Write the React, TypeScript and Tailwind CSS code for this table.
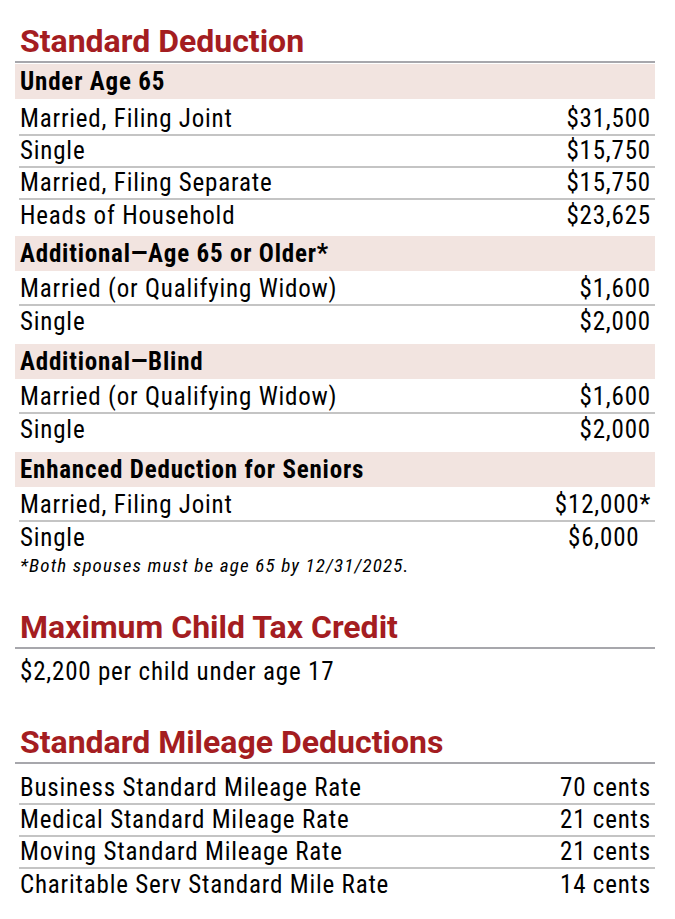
import type { ReactElement } from 'react';

type Row = { label: string; value: string; mark?: boolean };
type Group = { title: string; rows: Row[] };

const DEDUCTIONS: Group[] = [
  {
    title: 'Under Age 65',
    rows: [
      { label: 'Married, Filing Joint', value: '$31,500' },
      { label: 'Single', value: '$15,750' },
      { label: 'Married, Filing Separate', value: '$15,750' },
      { label: 'Heads of Household', value: '$23,625' },
    ],
  },
  {
    title: 'Additional\u2014Age 65 or Older*',
    rows: [
      { label: 'Married (or Qualifying Widow)', value: '$1,600' },
      { label: 'Single', value: '$2,000' },
    ],
  },
  {
    title: 'Additional\u2014Blind',
    rows: [
      { label: 'Married (or Qualifying Widow)', value: '$1,600' },
      { label: 'Single', value: '$2,000' },
    ],
  },
  {
    title: 'Enhanced Deduction for Seniors',
    rows: [
      { label: 'Married, Filing Joint', value: '$12,000*' },
      // trailing invisible asterisk keeps the digits lined up with the row above
      { label: 'Single', value: '$6,000', mark: true },
    ],
  },
];

const MILEAGE: Row[] = [
  { label: 'Business Standard Mileage Rate', value: '70 cents' },
  { label: 'Medical Standard Mileage Rate', value: '21 cents' },
  { label: 'Moving Standard Mileage Rate', value: '21 cents' },
  { label: 'Charitable Serv Standard Mile Rate', value: '14 cents' },
];

const BAND_SPACING = ['mt-0 mb-[5px]', 'mt-[4px] mb-[3px]', 'mt-[6px] mb-[3px]', 'mt-[6px] mb-[3px]'];

function Heading({ children }: { children: string }): ReactElement {
  return (
    <h2 className="border-b-2 border-[#a7a7ac] pb-[1px] pl-[5px] text-[32px] leading-[38px] font-bold text-[#a41d21]">
      {children}
    </h2>
  );
}

function LineRow({ row, last }: { row: Row; last: boolean }): ReactElement {
  return (
    <div
      className={`ml-[4px] flex h-[32px] items-center justify-between pl-[1px] pr-[4px] text-[25px] tracking-[0.8px] font-stretch-condensed ${
        last ? '' : 'border-b-2 border-[#c4c4c4]'
      }`}
    >
      <span>{row.label}</span>
      <span>
        {row.value}
        {row.mark ? <span className="invisible">*</span> : null}
      </span>
    </div>
  );
}

export default function App(): ReactElement {
  return (
    <div className="min-h-[919px] bg-white pl-[15px] pr-[20px] pt-[22px] font-['Roboto',sans-serif] text-black">
      <section>
        <Heading>Standard Deduction</Heading>
        <div className="mt-[1px]">
          {DEDUCTIONS.map((group, gi) => (
            <div key={group.title}>
              <div
                className={`flex h-[35px] items-center bg-[#f2e4e0] pl-[5px] text-[25px] font-bold tracking-[0.8px] font-stretch-condensed ${BAND_SPACING[gi]}`}
              >
                {group.title}
              </div>
              {group.rows.map((row, ri) => (
                <LineRow key={row.label} row={row} last={ri === group.rows.length - 1} />
              ))}
            </div>
          ))}
        </div>
        <p className="pl-[5px] text-[19px] italic leading-[24px] tracking-[1.15px] font-stretch-condensed">
          *Both spouses must be age 65 by 12/31/2025.
        </p>
      </section>

      <section className="mt-[30px]">
        <Heading>Maximum Child Tax Credit</Heading>
        <p className="mt-[7px] flex h-[32px] items-center pl-[5px] text-[25px] tracking-[0.8px] font-stretch-condensed">
          $2,200 per child under age 17
        </p>
      </section>

      <section className="mt-[35px]">
        <Heading>Standard Mileage Deductions</Heading>
        <div className="mt-[9px]">
          {MILEAGE.map((row, ri) => (
            <LineRow key={row.label} row={row} last={ri === MILEAGE.length - 1} />
          ))}
        </div>
      </section>
    </div>
  );
}
